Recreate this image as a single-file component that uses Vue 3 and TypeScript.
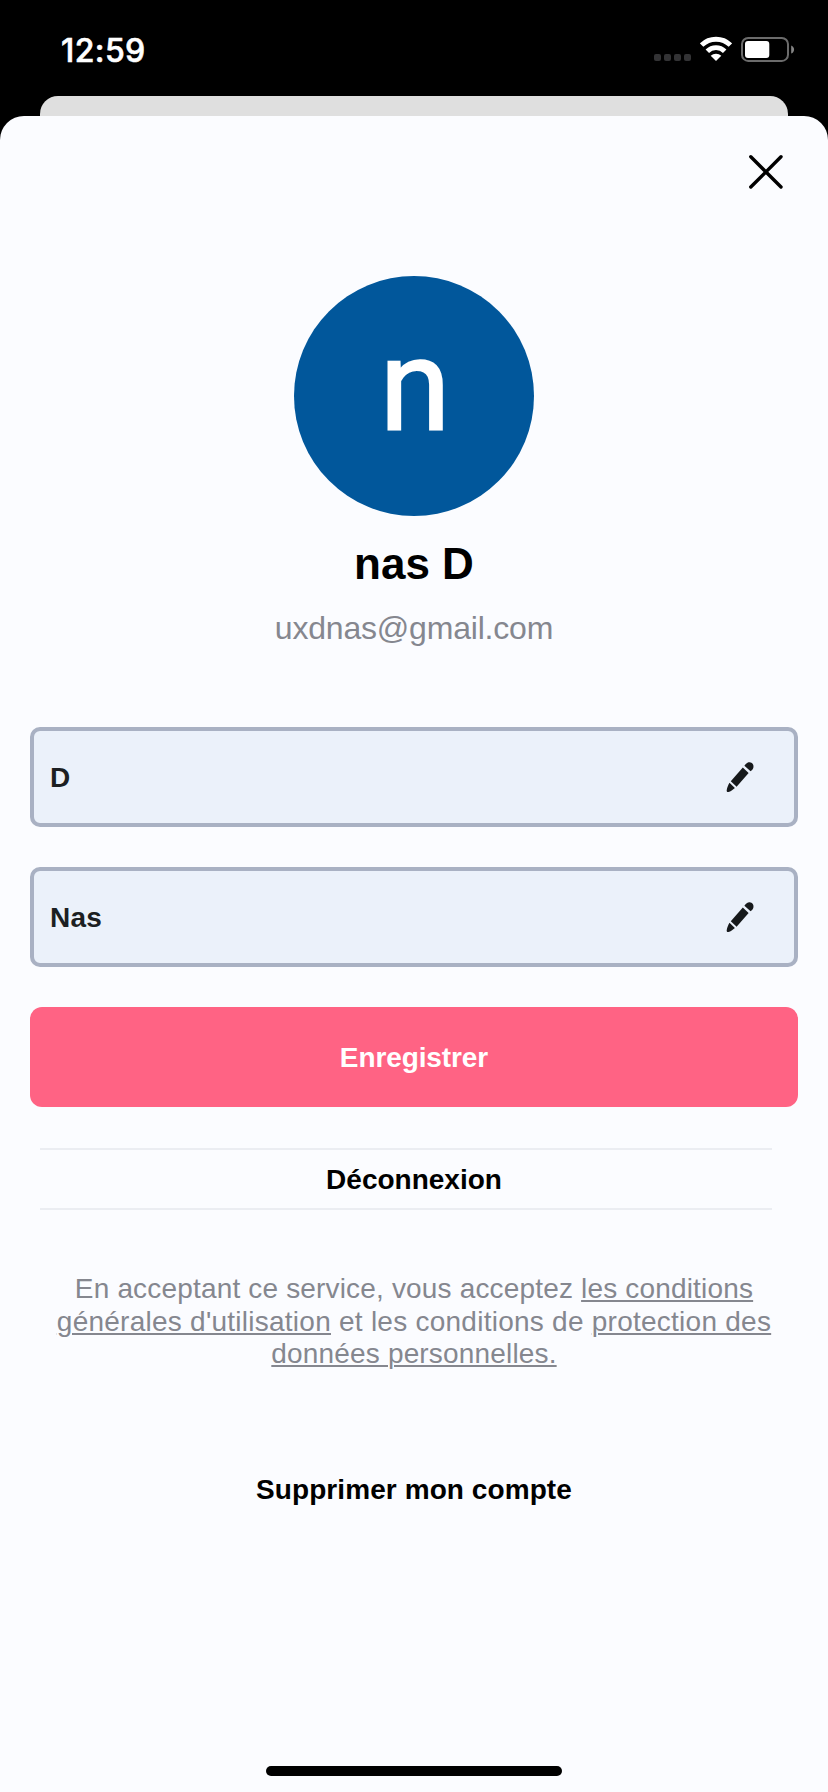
<script setup lang="ts">
import { ref } from 'vue'

interface Field {
  id: string
  value: string
}

const email = 'uxdnas@gmail.com'
const fields = ref<Field[]>([
  { id: 'lastname', value: 'D' },
  { id: 'firstname', value: 'Nas' },
])
</script>

<template>
  <div class="screen">
    <header class="status">
      <span class="time">12:59</span>
      <div class="indicators">
        <svg class="signal" width="38" height="26" viewBox="0 0 38 26">
          <g fill="#333335">
            <rect x="0" y="18" width="7" height="7" rx="2" />
            <rect x="10" y="18" width="7" height="7" rx="2" />
            <rect x="20" y="18" width="7" height="7" rx="2" />
            <rect x="30" y="18" width="7" height="7" rx="2" />
          </g>
        </svg>
        <svg class="wifi" width="32" height="26" viewBox="0 0 32 26">
          <g fill="none" stroke="#fff" stroke-width="4.9">
            <path d="M1.6 9.1A20.6 20.6 0 0 1 30.4 9.1" />
            <path d="M7.3 15.2A12.4 12.4 0 0 1 24.7 15.2" />
          </g>
          <path d="M16 25L10.7 19.8A7.6 7.6 0 0 1 21.3 19.8Z" fill="#fff" />
        </svg>
        <svg class="battery" width="54" height="26" viewBox="0 0 54 26">
          <rect x="1" y="1.9" width="46" height="23" rx="6.2" fill="none" stroke="#6b6b6b" stroke-width="2" />
          <rect x="4" y="5" width="24.3" height="17" rx="3" fill="#fff" />
          <path d="M50.2 9.4C54 10.8 54 16.2 50.2 17.6Z" fill="#858585" />
        </svg>
      </div>
    </header>
    <div class="back-card"></div>

    <main class="sheet">
      <button class="close" aria-label="Fermer">
        <svg width="36" height="36" viewBox="0 0 36 36">
          <path d="M2.8 2.8L33 33M33 2.8L2.8 33" stroke="#000" stroke-width="3.4" stroke-linecap="round" />
        </svg>
      </button>

      <div class="avatar"><span>n</span></div>
      <h1>nas D</h1>
      <p class="email">{{ email }}</p>

      <form class="form" @submit.prevent>
        <div v-for="f in fields" :key="f.id" class="field">
          <span>{{ f.value }}</span>
          <svg width="28" height="31" viewBox="0 0 28 31" fill="#16191b">
            <path d="M18.4 3.8C20 1.4 21.6 .2 23.6 .3C26.4 .5 28 3 27.4 5.4C27 7 25.8 8.2 24.6 9.3Z" />
            <path d="M16.8 5.6L22.6 10.9L10.6 24.8L4.8 19.3Z" />
            <path d="M3.5 20.8L8.9 26C6.8 27.9 4.7 29.4 2.4 30C1.2 30.3.5 29.5.7 28.3C1.1 25.8 2.1 23 3.5 20.8Z" />
          </svg>
        </div>
        <button class="save" type="submit">Enregistrer</button>
      </form>

      <button class="logout">Déconnexion</button>

      <p class="terms">
        En acceptant ce service, vous acceptez <a>les conditions<br /><span class="wide">générales d'utilisation</span></a>
        <span class="wide"> et les conditions de </span>
        <a><span class="wide">protection des</span><br />données personnelles.</a>
      </p>

      <button class="delete">Supprimer mon compte</button>
      <div class="home"></div>
    </main>
  </div>
</template>

<style>
body {
  margin: 0;
  background: #000;
}
</style>

<style scoped>
.screen {
  width: 828px;
  height: 1792px;
  overflow: hidden;
  display: flex;
  flex-direction: column;
  background: #000;
  font-family: "Liberation Sans", Helvetica, Arial, sans-serif;
}
button {
  border: 0;
  padding: 0;
  background: none;
  font: inherit;
  color: inherit;
}
svg {
  display: block;
}
.status {
  height: 96px;
  box-sizing: border-box;
  padding: 36px 34px 0 61px;
  display: flex;
  justify-content: space-between;
  color: #fff;
}
.time {
  font: 500 32px/29px Inter, sans-serif;
  letter-spacing: 0.4px;
  -webkit-text-stroke: 0.6px #fff;
}
.indicators {
  display: flex;
}
.signal {
  margin-right: 8.5px;
}
.wifi {
  margin-right: 9px;
}
.battery {
  margin-right: -1px;
}
.back-card {
  height: 20px;
  margin: 0 40px;
  border-radius: 18px 18px 0 0;
  background: #dfdfdf;
}
.sheet {
  flex: 1;
  border-radius: 24px 24px 0 0;
  background: #fbfcff;
  display: flex;
  flex-direction: column;
  align-items: center;
}
.close {
  align-self: flex-end;
  margin: 38px 44px 0 0;
}
.avatar {
  width: 240px;
  height: 240px;
  box-sizing: border-box;
  padding-left: 2px;
  margin-top: 86px;
  border-radius: 50%;
  background: #01579b;
  color: #fff;
  display: flex;
  justify-content: center;
  font: 400 128px/221px Roboto, sans-serif;
  -webkit-text-stroke: 2px #fff;
}
h1 {
  margin: 24px 0 0;
  font-size: 44px;
  line-height: 48px;
  font-weight: 700;
}
.email {
  margin: 20px 0 0;
  font-size: 32px;
  line-height: 40px;
  letter-spacing: -0.2px;
  color: #85878f;
}
.form {
  width: 768px;
  margin-top: 79px;
  display: flex;
  flex-direction: column;
  gap: 40px;
}
.field {
  height: 100px;
  box-sizing: border-box;
  padding: 0 40px 0 16px;
  border: 4px solid #a9b1c3;
  border-radius: 10px;
  background: #ebf1fa;
  display: flex;
  align-items: center;
  justify-content: space-between;
  color: #1c1f22;
  font-size: 28px;
  font-weight: 700;
  letter-spacing: 0.2px;
}
.field span {
  padding-top: 2px;
}
.save {
  height: 100px;
  padding-top: 2px;
  border-radius: 12px;
  background: #ff6384;
  color: #fff;
  font-size: 28px;
  font-weight: 700;
  letter-spacing: -0.1px;
}
.logout {
  width: 732px;
  height: 62px;
  box-sizing: border-box;
  margin: 41px 56px 0 40px;
  align-self: flex-start;
  padding: 2px 0 0 16px;
  border-top: 2px solid #ebedf2;
  border-bottom: 2px solid #ebedf2;
  font-size: 28px;
  font-weight: 700;
}
.terms {
  margin: 63px 0 0;
  font-size: 28px;
  line-height: 32.6px;
  letter-spacing: 0.17px;
  text-align: center;
  color: #85878f;
}
.terms a {
  text-decoration: underline;
  text-decoration-thickness: 2px;
  text-underline-offset: 2px;
}
.terms .wide {
  letter-spacing: 0.25px;
}
.delete {
  margin-top: 99px;
  font-size: 28px;
  line-height: 40px;
  font-weight: 700;
  letter-spacing: 0.08px;
}
.home {
  width: 296px;
  height: 10px;
  margin: auto 0 16px;
  border-radius: 5px;
  background: #000;
}
</style>
